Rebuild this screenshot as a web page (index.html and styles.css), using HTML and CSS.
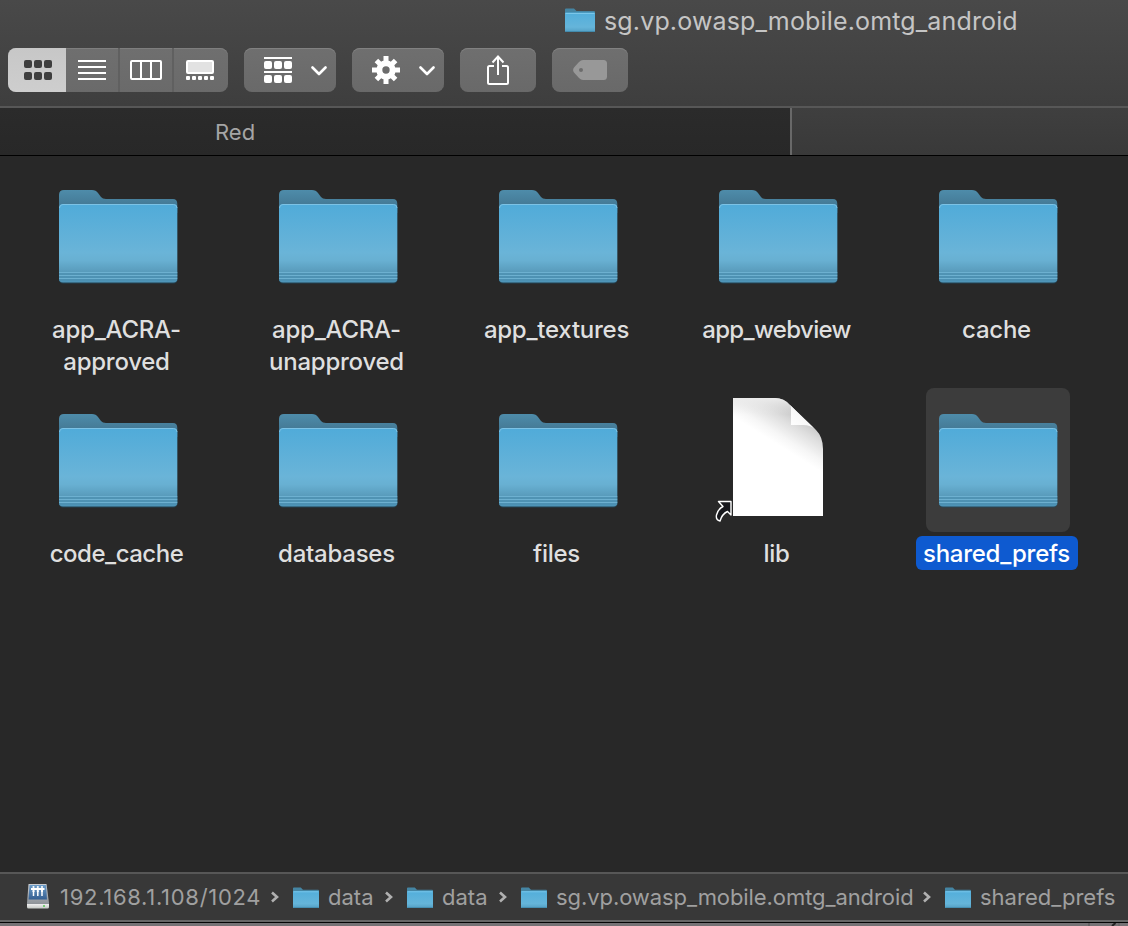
FILE: index.html
```html
<!DOCTYPE html>
<html lang="en">
<head>
<meta charset="utf-8">
<title>sg.vp.owasp_mobile.omtg_android</title>
<link rel="stylesheet" href="styles.css">
</head>
<body>
<svg class="defs" width="0" height="0" aria-hidden="true">
  <defs>
    <linearGradient id="front" x1="0" y1="0" x2="0" y2="1">
      <stop offset="0" stop-color="#50abd9"/><stop offset=".62" stop-color="#6ab4d8"/><stop offset=".72" stop-color="#68b0d2"/><stop offset=".88" stop-color="#5799b9"/><stop offset="1" stop-color="#4d94b8"/>
    </linearGradient>
    <linearGradient id="back" x1="0" y1="0" x2="0" y2="1">
      <stop offset="0" stop-color="#4e8caa"/><stop offset="1" stop-color="#3f708b"/>
    </linearGradient>
    <linearGradient id="mini" x1="0" y1="0" x2="0" y2="1">
      <stop offset="0" stop-color="#52aedb"/><stop offset=".75" stop-color="#65b5da"/><stop offset="1" stop-color="#539fc3"/>
    </linearGradient>
    <linearGradient id="page" gradientUnits="userSpaceOnUse" x1="70" y1="18" x2="50" y2="50">
      <stop offset="0" stop-color="#c4c4c4"/><stop offset=".35" stop-color="#dedede"/><stop offset=".75" stop-color="#f6f6f6"/><stop offset="1" stop-color="#fff"/>
    </linearGradient>
    <linearGradient id="page-top" x1="0" y1="0" x2="0" y2="1">
      <stop offset="0" stop-color="#ececec"/><stop offset=".14" stop-color="#ececec" stop-opacity="0"/>
    </linearGradient>
    <linearGradient id="curl" x1="0" y1="1" x2="1" y2="0">
      <stop offset="0" stop-color="#fff"/><stop offset="1" stop-color="#efefef"/>
    </linearGradient>
    <linearGradient id="disk" x1="0" y1="0" x2="0" y2="1">
      <stop offset="0" stop-color="#c9ccd0"/><stop offset=".8" stop-color="#8f9499"/><stop offset=".82" stop-color="#eee"/><stop offset="1" stop-color="#c5c9c5"/>
    </linearGradient>
    <linearGradient id="screen" x1="0" y1="0" x2="0" y2="1">
      <stop offset="0" stop-color="#6c9cc8"/><stop offset="1" stop-color="#355f91"/>
    </linearGradient>
    <symbol id="folder" viewBox="0 0 120 96">
      <path d="M1 20V6Q1 1 6 1H34Q38 1 40 4L43 8Q44.500 10 48 10H115Q119.300 10 119.300 15V24H1Z" fill="url(#back)"/>
      <rect x="1" y="15" width="118.300" height="79.500" rx="4" fill="#214e66" opacity=".65"/>
      <rect x="1" y="15" width="118.300" height="78.500" rx="4" fill="url(#front)"/>
      <path d="M1.500 19Q1.500 15.500 5 15.500H115.500Q119 15.500 119 19" fill="none" stroke="#7cc2e5" stroke-width="1"/>
      <path d="M1 83.500H119.300M1 86.500H119.300M1 89.500H119.300" stroke="#6db0d0" stroke-width="1"/>
      <path d="M1 85H119.300M1 88H119.300M1 91H119.300" stroke="#4a8dae" stroke-width="1"/>
    </symbol>
    <symbol id="small-folder" viewBox="0 0 30 24" preserveAspectRatio="none">
      <path d="M0 7V1.500Q0 .5 1 .5H9L11.500 3H29Q30 3 30 4V7Z" fill="#4585a3"/>
      <rect y="4.500" width="30" height="19.500" rx="1" fill="url(#mini)"/>
      <path d="M.5 5.500H29.500" stroke="#7bc7ea"/>
      <path d="M.5 23.500H29.500" stroke="#438bad"/>
    </symbol>
    <symbol id="sep" viewBox="0 0 10 14"><path d="M2 2.500L7 7L2 11.500" fill="none" stroke="#b0b0b0" stroke-width="2.600"/></symbol>
    <symbol id="chevron" viewBox="0 0 16 10"><path d="M1.500 1.500L8 8L14.500 1.500" fill="none" stroke="#fff" stroke-width="2.600" stroke-linecap="round" stroke-linejoin="round"/></symbol>
  </defs>
</svg>
<div class="window">
  <header class="header">
    <div class="title"><svg class="title-icon"><use href="#small-folder"/></svg><span class="title-text">sg.vp.owasp_mobile.omtg_android</span></div>
    <div class="toolbar">
      <div class="segments">
        <div class="segment active"><svg width="28" height="20" fill="#3e3e3e"><rect width="8" height="8" rx="2"/><rect x="10" width="8" height="8" rx="2"/><rect x="20" width="8" height="8" rx="2"/><rect y="12" width="8" height="8" rx="2"/><rect x="10" y="12" width="8" height="8" rx="2"/><rect x="20" y="12" width="8" height="8" rx="2"/></svg></div>
        <div class="segment"><svg width="28" height="20" fill="#fff"><path d="M0 0H28V2H0ZM0 6H28V8H0ZM0 12H28V14H0ZM0 18H28V20H0Z"/></svg></div>
        <div class="segment"><svg width="32" height="20" fill="none" stroke="#fff" stroke-width="2"><rect x="1" y="1" width="30" height="18" rx="1"/><path d="M11 1V19M21 1V19"/></svg></div>
        <div class="segment"><svg width="28" height="20" fill="#fff"><rect x="1" y="1" width="26" height="12" rx="1" fill="#e2e2e2" stroke="#fff" stroke-width="2"/><rect y="16" width="4" height="4" rx="1"/><rect x="6" y="16" width="4" height="4" rx="1"/><rect x="12" y="16" width="4" height="4" rx="1"/><rect x="18" y="16" width="4" height="4" rx="1"/><rect x="24" y="16" width="4" height="4" rx="1"/></svg></div>
      </div>
      <div class="button wide"><svg width="28" height="26" fill="#fff"><path d="M0 0H28V2H0ZM0 14H28V16H0Z"/><rect y="4" width="8" height="8" rx="2"/><rect x="10" y="4" width="8" height="8" rx="2"/><rect x="20" y="4" width="8" height="8" rx="2"/><rect y="18" width="8" height="8" rx="2"/><rect x="10" y="18" width="8" height="8" rx="2"/><rect x="20" y="18" width="8" height="8" rx="2"/></svg><svg class="chevron"><use href="#chevron"/></svg></div>
      <div class="button wide"><svg width="28" height="28" viewBox="-14 -14 28 28"><g stroke="#fff" stroke-width="5"><path d="M0-14V-7M0 14V7M-14 0H-7M14 0H7M-9.600-9.600L-5-5M9.600 9.600L5 5M-9.600 9.600L-5 5M9.600-9.600L5-5"/></g><circle r="6.700" fill="none" stroke="#fff" stroke-width="6"/></svg><svg class="chevron"><use href="#chevron"/></svg></div>
      <div class="button"><svg width="22" height="30" fill="none" stroke="#fff" stroke-width="2"><path d="M7 11H2.500Q1 11 1 12.500V27.500Q1 29 2.500 29H19.500Q21 29 21 27.500V12.500Q21 11 19.500 11H15M11 20V2M5.500 7.500L11 1.500L16.500 7.500"/></svg></div>
      <div class="button"><svg width="34" height="20"><path fill-rule="evenodd" d="M10 0H30.500Q34 0 34 3.500V16.500Q34 20 30.500 20H10Q8 20 6 18L1 12.500Q-.8 10 1 7.500L6 2Q8 0 10 0ZM8 8A2 2 0 1 0 8 12A2 2 0 1 0 8 8" fill="#989898"/></svg></div>
    </div>
  </header>
  <nav class="tabs"><div class="tab back-tab"><span class="tab-text">Red</span></div><div class="tab front-tab"></div></nav>
  <main class="files">
    <div class="item"><div class="tile"><svg class="folder"><use href="#folder"/></svg></div><div class="label"><span class="name">app_ACRA-</span><span class="name">approved</span></div></div>
    <div class="item"><div class="tile"><svg class="folder"><use href="#folder"/></svg></div><div class="label"><span class="name">app_ACRA-</span><span class="name">unapproved</span></div></div>
    <div class="item"><div class="tile"><svg class="folder"><use href="#folder"/></svg></div><div class="label"><span class="name">app_textures</span></div></div>
    <div class="item"><div class="tile"><svg class="folder"><use href="#folder"/></svg></div><div class="label"><span class="name tight">app_webview</span></div></div>
    <div class="item"><div class="tile"><svg class="folder"><use href="#folder"/></svg></div><div class="label"><span class="name">cache</span></div></div>
    <div class="item"><div class="tile"><svg class="folder"><use href="#folder"/></svg></div><div class="label"><span class="name snug">code_cache</span></div></div>
    <div class="item"><div class="tile"><svg class="folder"><use href="#folder"/></svg></div><div class="label"><span class="name">databases</span></div></div>
    <div class="item"><div class="tile"><svg class="folder"><use href="#folder"/></svg></div><div class="label"><span class="name">files</span></div></div>
    <div class="item"><div class="tile"><svg class="document" width="144" height="144"><g transform="translate(27 10)"><path d="M0 0H42Q51 0 57 7L83 32Q90 39 90 51V118H0Z" fill="url(#page)"/><path d="M0 0H42Q51 0 57 7L83 32Q90 39 90 51V118H0Z" fill="url(#page-top)"/><path d="M57 7L83 32Q78 27 70 27H58V9Z" fill="url(#curl)"/></g><path d="M12.500 113.500H25V127L21.500 123.500Q16 126 14 133Q9.500 132 10.500 127Q12 121 17 118.500Z" fill="#17181c" stroke="#fff" stroke-width="1.400" stroke-linejoin="round"/></svg></div><div class="label"><span class="name">lib</span></div></div>
    <div class="item selected"><div class="tile"><svg class="folder"><use href="#folder"/></svg></div><div class="label"><span class="name">shared_prefs</span></div></div>
  </main>
  <footer class="path">
    <div class="crumb server"><svg class="drive" width="24" height="26"><path d="M2.500 1H20.500L23 20V24Q23 25.500 21.500 25.500H2.500Q1 25.500 1 24V20Z" fill="url(#disk)"/><path d="M3.500 2H20L21 16.500H2.500Z" fill="url(#screen)"/><path d="M5 6H18.500M7.500 5V9M11.800 5V9M16 5V9" stroke="#fff" stroke-width="2"/><path d="M7.500 8V13M11.800 8V13M16 8V13" stroke="#fff" stroke-width="1.500"/><g fill="#fff"><circle cx="7.500" cy="4" r="1.100"/><circle cx="11.800" cy="4" r="1.100"/><circle cx="16" cy="4" r="1.100"/></g><circle cx="18" cy="23" r="1" fill="#53c753"/></svg><span class="crumb-text address">192.168.1.108/1024</span><svg class="sep"><use href="#sep"/></svg></div>
    <div class="crumb short"><svg class="path-folder"><use href="#small-folder"/></svg><span class="crumb-text">data</span><svg class="sep"><use href="#sep"/></svg></div>
    <div class="crumb short"><svg class="path-folder"><use href="#small-folder"/></svg><span class="crumb-text">data</span><svg class="sep"><use href="#sep"/></svg></div>
    <div class="crumb long"><svg class="path-folder"><use href="#small-folder"/></svg><span class="crumb-text package">sg.vp.owasp_mobile.omtg_android</span><svg class="sep"><use href="#sep"/></svg></div>
    <div class="crumb"><svg class="path-folder"><use href="#small-folder"/></svg><span class="crumb-text">shared_prefs</span></div>
  </footer>
  <div class="desktop"><svg width="40" height="3"><path d="M1 0V3" stroke="#636163" stroke-width="2"/><path d="M24 3L27.500 0" stroke="#222" stroke-width="2"/><path d="M31 0V3" stroke="#636163"/></svg></div>
</div>
</body>
</html>
```

FILE: styles.css
```css
* { box-sizing: border-box; }
body { margin: 0; background: #282828; font-family: Inter, "Liberation Sans", sans-serif; }
svg { display: block; flex: none; }
.defs { position: absolute; }
.window { width: 1128px; height: 926px; display: flex; flex-direction: column; overflow: hidden; background: #282828; }
.header { height: 108px; background: linear-gradient(#494949, #3e3e3e); border-bottom: 2px solid #575757; }
.title { height: 48px; padding: 0 0 6px 565px; display: flex; align-items: center; gap: 9px; }
.title-icon { width: 30px; height: 24px; margin-top: -2px; }
.title-text { font-size: 25px; line-height: 30px; letter-spacing: .15px; color: #c5c5c5; white-space: nowrap; }
.toolbar { display: flex; gap: 16px; padding-left: 8px; height: 44px; }
.segments { display: flex; width: 220px; border-radius: 8px; overflow: hidden; background: linear-gradient(#6f6f6f, #6a6a6a); box-shadow: inset 0 1px #7e7e7e; }
.segment { width: 54px; display: flex; align-items: center; justify-content: center; border-left: 2px solid #606060; }
.segment.active { width: 58px; background: linear-gradient(#c7c7c7, #cecece); border: 0; padding-left: 2px; }
.segment.active + .segment { width: 52px; border: 0; }
.segment:last-child { width: 56px; padding-right: 2px; }
.button { width: 76px; border-radius: 8px; background: linear-gradient(#6f6f6f, #696969); box-shadow: inset 0 1px #818181; display: flex; align-items: center; justify-content: center; }
.button.wide { width: 92px; justify-content: flex-start; padding-left: 20px; gap: 18.5px; }
.chevron { width: 16px; height: 10px; margin-top: 1px; }
.tabs { display: flex; height: 48px; border-bottom: 1px solid #000; }
.back-tab { width: 792px; background: linear-gradient(#2b2b2b, #282828); border-right: 2px solid #686868; padding-left: 215px; display: flex; align-items: center; }
.front-tab { flex: 1; background: linear-gradient(#3f3f3f, #393939); }
.tab-text { font-size: 22px; color: #a5a5a5; padding-top: 1px; }
.files { flex: 1; padding: 8px 0 0 8px; display: grid; grid-template-columns: repeat(5, 220px); grid-template-rows: 224px 224px; }
.item { display: flex; flex-direction: column; align-items: center; }
.tile { width: 144px; height: 144px; border-radius: 8px; flex: none; }
.folder { width: 120px; height: 96px; margin: 24.5px 0 0 12px; }
.label { display: flex; flex-direction: column; align-items: center; margin: 4px 2px 0 0; }
.name { font-size: 24px; line-height: 32px; height: 34px; letter-spacing: -.25px; font-weight: 500; color: #dfdfdf; white-space: nowrap; padding: 2px 8px 0 7px; border-radius: 6px; }
.name.tight { letter-spacing: -.65px; }
.name.snug { letter-spacing: -.5px; }
.name + .name { margin-top: -2px; }
.selected .tile { background: #3c3c3c; }
.selected .name { background: #0e5ad0; color: #fff; }
.path { height: 50px; background: #383838; border-top: 2px solid #575757; border-bottom: 2px solid #676767; display: flex; align-items: center; padding-left: 26px; }
.crumb { display: flex; align-items: center; }
.server { width: 267px; }
.short { width: 114px; }
.long { width: 424px; }
.path-folder { width: 26px; height: 21px; }
.drive { margin: -2px 10px 0 0; }
.crumb-text { font-size: 22px; color: #a0a0a0; white-space: nowrap; }
.address { letter-spacing: .71px; }
.package { letter-spacing: -.08px; }
.path-folder + .crumb-text { margin-left: 9px; }
.sep { width: 10px; height: 14px; margin-left: auto; margin-right: 13px; }
.desktop { height: 4px; background: #757275; border-top: 1px solid #050505; padding-left: 1088px; }
```
